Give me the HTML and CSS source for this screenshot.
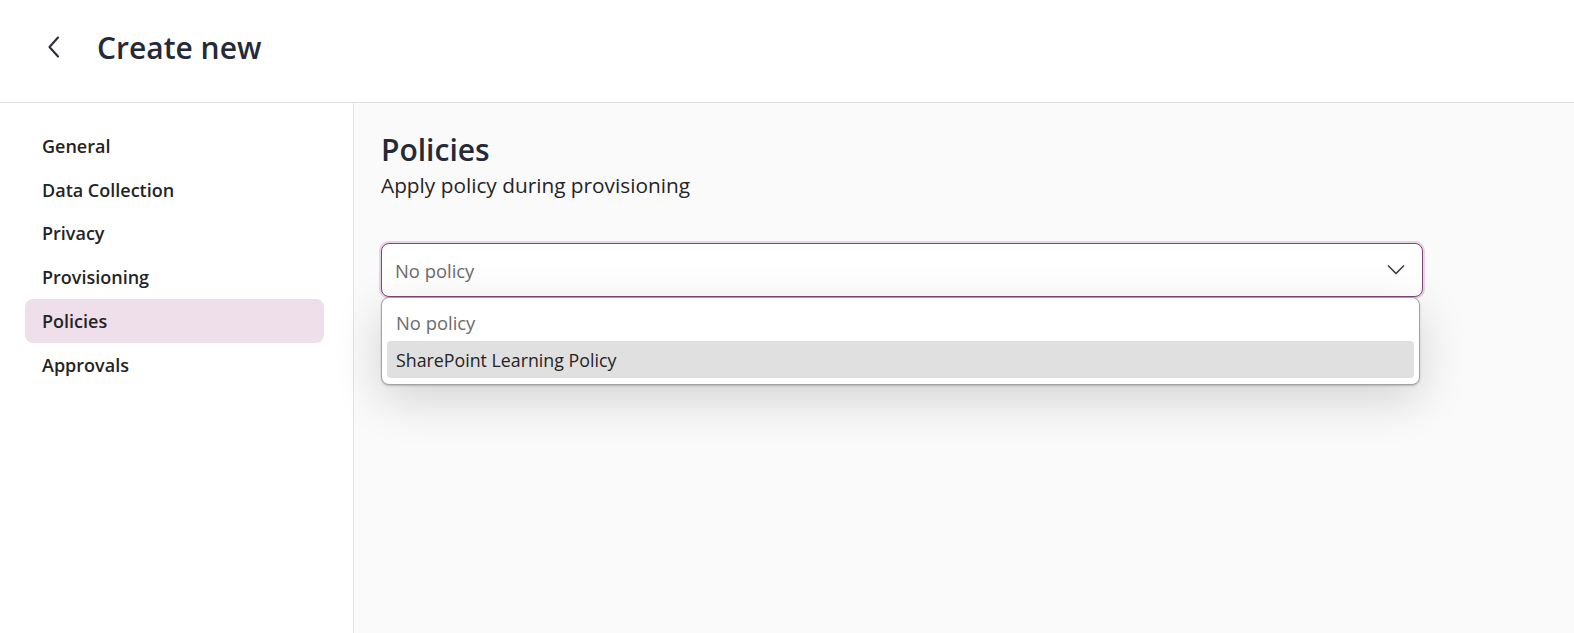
FILE: index.html
```html
<!DOCTYPE html>
<html lang="en">
<head>
    <meta charset="UTF-8">
    <meta name="viewport" content="width=device-width, initial-scale=1.0">
    <title>Create new</title>

    <link rel="stylesheet" href="styles.css">
</head>
<body>

    <div class="header">
        <button class="back" aria-label="Back">
            <svg width="16" height="24" viewBox="0 0 16 24">
                <path d="M12 2.5 L3.5 12 L12 21.5" fill="none" stroke="#2b2e3b" stroke-width="2.1" stroke-linecap="round" stroke-linejoin="round"/>
            </svg>
        </button>
        <h1>Create new</h1>
    </div>

    <div class="page">
        <div class="sidebar">
            <div class="nav_item">General</div>
            <div class="nav_item">Data Collection</div>
            <div class="nav_item">Privacy</div>
            <div class="nav_item">Provisioning</div>
            <div class="nav_item active">Policies</div>
            <div class="nav_item">Approvals</div>
        </div>

        <div class="main">
            <h2>Policies</h2>
            <p class="subtitle">Apply policy during provisioning</p>

            <div class="combo">
                <div class="select">
                    <span class="placeholder">No policy</span>
                    <svg width="18" height="12" viewBox="0 0 18 12">
                        <path d="M1.5 2 L9 9.5 L16.5 2" fill="none" stroke="#424242" stroke-width="1.7" stroke-linecap="round" stroke-linejoin="round"/>
                    </svg>
                </div>

                <div class="listbox">
                    <div class="option muted">No policy</div>
                    <div class="option hover">SharePoint Learning Policy</div>
                </div>
            </div>
        </div>
    </div>

</body>
</html>
```

FILE: styles.css
```css
body {
    margin: 0;
    padding: 0;
    font-family: "Open Sans", "Noto Sans", sans-serif;
    color: #242424;
    background: #fff;
    height: 100vh;
    overflow: hidden;
    display: flex;
    flex-direction: column;
}

.header {
    height: 103px;
    flex-shrink: 0;
    display: flex;
    align-items: center;
    border-bottom: 1px solid #e0e0e0;
    box-sizing: border-box;
    padding-left: 44px;
}

.back {
    border: none;
    background: none;
    padding: 0;
    width: 20px;
    height: 24px;
    margin-top: -8px;
    display: flex;
    align-items: center;
    justify-content: center;
}

.header h1 {
    margin: -8px 0 0 33px;
    font-size: 30px;
    font-weight: 600;
    color: #262a37;
}

.page {
    flex: 1;
    display: flex;
}

.sidebar {
    width: 354px;
    flex-shrink: 0;
    border-right: 1px solid #e3e3e3;
    padding: 21px 0 0 25px;
    box-sizing: border-box;
}

.nav_item {
    width: 299px;
    height: 43.8px;
    box-sizing: border-box;
    padding-left: 17px;
    display: flex;
    align-items: center;
    font-size: 18px;
    font-weight: 600;
    color: #242424;
    border-radius: 8px;
}

.nav_item.active {
    background: #eedfeb;
}

.main {
    flex: 1;
    background: #fafafa;
    padding: 26px 0 0 27px;
}

.main h2 {
    margin: 0;
    font-size: 30px;
    font-weight: 600;
    color: #262a37;
    line-height: 42px;
}

.subtitle {
    margin: 0;
    font-size: 20.8px;
    line-height: 28px;
    color: #242424;
}

.combo {
    position: relative;
    width: 1042px;
    margin-top: 44px;
}

.select {
    height: 54px;
    box-sizing: border-box;
    border: 1px solid #86437a;
    border-radius: 8px;
    background: #fff;
    box-shadow: 0 0 0 2px #e6d3e3;
    display: flex;
    align-items: center;
    justify-content: space-between;
    padding: 0 17px 0 13px;
}

.placeholder {
    font-size: 18.4px;
    color: #6b6b6b;
}

.listbox {
    position: absolute;
    top: 54px;
    left: 0;
    width: 1039px;
    box-sizing: border-box;
    background: #fff;
    border: 1px solid #a3a3a3;
    border-radius: 8px;
    padding: 6px 5px;
    box-shadow: 0 1px 2px rgba(0, 0, 0, 0.2), 0 14px 48px rgba(0, 0, 0, 0.16);
}

.option {
    height: 37px;
    display: flex;
    align-items: center;
    padding-left: 9px;
    font-size: 17.8px;
    border-radius: 4px;
}

.option.muted {
    color: #6b6b6b;
    font-size: 18.4px;
}

.option.hover {
    background: #e0e0e0;
    color: #242424;
}
```
